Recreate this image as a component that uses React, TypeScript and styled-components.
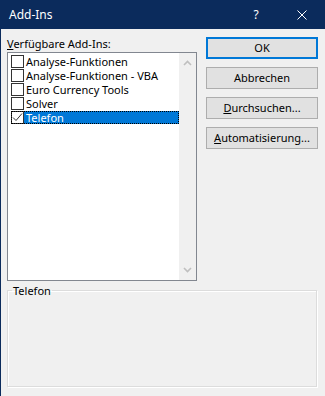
import React from "react";
import styled, { createGlobalStyle } from "styled-components";

const Global = createGlobalStyle`
  html, body { margin: 0; padding: 0; background: #f0f0f0; }
  body {
    font-family: "Noto Sans", "Open Sans", "DejaVu Sans", sans-serif;
    font-size: 11px;
    color: #000;
  }
`;

const NAVY = "#0b2b5c";

const Window = styled.div`
  width: 325px;
  height: 396px;
  box-sizing: border-box;
  border-left: 1px solid ${NAVY};
  background: #f0f0f0;
  display: flex;
  flex-direction: column;
  overflow: hidden;
`;

const TitleBar = styled.div`
  height: 29px;
  flex-shrink: 0;
  background: ${NAVY};
  color: #fff;
  display: flex;
  align-items: center;
  padding-left: 8px;
`;

const Title = styled.div`
  flex: 1;
  font-size: 12px;
  line-height: 16px;
`;

const HelpButton = styled.div`
  width: 32px;
  text-align: center;
  font-size: 12px;
  line-height: 16px;
  margin-right: 7px;
`;

const CloseButton = styled.div`
  width: 46px;
  height: 29px;
  display: flex;
  align-items: center;
  justify-content: center;
`;

const Body = styled.div`
  flex: 1;
  display: flex;
  flex-direction: column;
  padding: 7px 7px 0 6px;
`;

const Top = styled.div`
  display: flex;
  gap: 9px;
`;

const LeftCol = styled.div`
  width: 190px;
  display: flex;
  flex-direction: column;
`;

const Label = styled.div`
  line-height: 15px;
  height: 15px;
  margin-bottom: 1px;
  white-space: nowrap;
`;

const Mn = styled.span`
  text-decoration: underline;
  text-underline-offset: 1px;
`;

const ListBox = styled.div`
  height: 229px;
  box-sizing: border-box;
  border: 1px solid #828790;
  background: #fff;
  display: flex;
`;

const Items = styled.div`
  flex: 1;
  padding: 2px 0 0 3px;
  display: flex;
  flex-direction: column;
  gap: 1px;
`;

const Row = styled.div<{ $focused?: boolean }>`
  height: 13px;
  display: flex;
  ${(p) => p.$focused && `outline: 1px dotted #000; outline-offset: -1px;`}
`;

const Box = styled.div`
  width: 13px;
  height: 13px;
  box-sizing: border-box;
  border: 1px solid #333;
  background: #fff;
  flex-shrink: 0;
  display: flex;
  align-items: center;
  justify-content: center;
`;

const ItemText = styled.div<{ $selected?: boolean }>`
  flex: 1;
  padding-left: 2px;
  height: 13px;
  line-height: 13px;
  white-space: nowrap;
  background: ${(p) => (p.$selected ? "#0078d7" : "transparent")};
  color: ${(p) => (p.$selected ? "#fff" : "#000")};
`;

const ScrollBar = styled.div`
  width: 17px;
  background: #f0f0f0;
  display: flex;
  flex-direction: column;
  justify-content: space-between;
`;

const Arrow = styled.div`
  height: 20px;
  display: flex;
  align-items: center;
  justify-content: center;
`;

const ButtonCol = styled.div`
  width: 112px;
  padding-top: 1px;
  display: flex;
  flex-direction: column;
  gap: 8px;
`;

const Button = styled.button<{ $primary?: boolean }>`
  height: 22px;
  box-sizing: border-box;
  margin: 0;
  padding: 0;
  font-family: inherit;
  font-size: 11px;
  line-height: 18px;
  color: #000;
  background: #e1e1e1;
  border: ${(p) => (p.$primary ? "2px solid #0078d7" : "1px solid #adadad")};
  text-align: center;
`;

const Group = styled.fieldset`
  margin: 2px 0 0 0;
  width: 310px;
  height: 104px;
  box-sizing: border-box;
  padding: 0 0 0 4px;
  border: 1px solid #dcdcdc;
  box-shadow: 1px 1px 0 #fff, inset 1px 1px 0 #fff;
  min-width: 0;
`;

const Legend = styled.legend`
  padding: 0 1px;
  font-size: 11px;
  line-height: 15px;
`;

const items = [
  { name: "Analyse-Funktionen", checked: false },
  { name: "Analyse-Funktionen - VBA", checked: false },
  { name: "Euro Currency Tools", checked: false },
  { name: "Solver", checked: false },
  { name: "Telefon", checked: true, selected: true },
];

export default function App() {
  return (
    <>
      <Global />
      <Window>
        <TitleBar>
          <Title>Add-Ins</Title>
          <HelpButton>?</HelpButton>
          <CloseButton>
            <svg width="10" height="10" viewBox="0 0 10 10">
              <path d="M0.5 0.5 L9.5 9.5 M9.5 0.5 L0.5 9.5" stroke="#fff" strokeWidth="1" />
            </svg>
          </CloseButton>
        </TitleBar>
        <Body>
          <Top>
            <LeftCol>
              <Label>
                <Mn>V</Mn>erfügbare Add-Ins:
              </Label>
              <ListBox>
                <Items>
                  {items.map((it) => (
                    <Row key={it.name} $focused={it.selected}>
                      <Box>
                        {it.checked && (
                          <svg width="11" height="11" viewBox="0 0 11 11">
                            <path d="M1 5.5 L4 8.5 L10 1.5" fill="none" stroke="#333" strokeWidth="1" />
                          </svg>
                        )}
                      </Box>
                      <ItemText $selected={it.selected}>{it.name}</ItemText>
                    </Row>
                  ))}
                </Items>
                <ScrollBar>
                  <Arrow>
                    <svg width="9" height="6" viewBox="0 0 9 6">
                      <path d="M1 5 L4.5 1.5 L8 5" fill="none" stroke="#bfbfbf" strokeWidth="1.6" />
                    </svg>
                  </Arrow>
                  <Arrow>
                    <svg width="9" height="6" viewBox="0 0 9 6">
                      <path d="M1 1 L4.5 4.5 L8 1" fill="none" stroke="#bfbfbf" strokeWidth="1.6" />
                    </svg>
                  </Arrow>
                </ScrollBar>
              </ListBox>
            </LeftCol>
            <ButtonCol>
              <Button $primary>OK</Button>
              <Button>Abbrechen</Button>
              <Button>
                <Mn>D</Mn>urchsuchen...
              </Button>
              <Button>
                <Mn>A</Mn>utomatisierung...
              </Button>
            </ButtonCol>
          </Top>
          <Group>
            <Legend>Telefon</Legend>
          </Group>
        </Body>
      </Window>
    </>
  );
}
